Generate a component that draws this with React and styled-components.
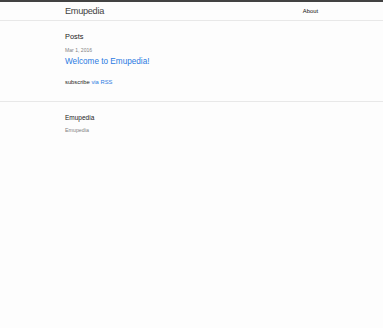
import React from "react";
import styled, { createGlobalStyle } from "styled-components";

const Global = createGlobalStyle`
  html, body { margin: 0; padding: 0; background: #fdfdfd; }
  body { font-family: "Liberation Sans", Arial, sans-serif; color: #111; }
`;

const Header = styled.header`
  border-top: 2px solid #424242;
  border-bottom: 1px solid #e8e8e8;
`;

const Wrapper = styled.div`
  width: 253px;
  margin: 0 auto;
`;

const HeaderRow = styled(Wrapper)`
  display: flex;
  justify-content: space-between;
  align-items: center;
  height: 18px;
`;

const SiteTitle = styled.a`
  font-size: 9.2px;
  letter-spacing: -0.3px;
  color: #424242;
  text-decoration: none;
`;

const NavLink = styled.a`
  font-size: 5.8px;
  color: #111;
  text-decoration: none;
`;

const Main = styled.main`
  padding: 11px 0 15px;
  border-bottom: 1px solid #e8e8e8;
`;

const Heading = styled.h1`
  font-size: 7.4px;
  font-weight: normal;
  line-height: 10px;
  margin: 0 0 5px;
  color: #222;
`;

const Meta = styled.div`
  font-size: 5.1px;
  line-height: 7px;
  color: #828282;
  margin-bottom: 2px;
`;

const PostLink = styled.a`
  display: block;
  font-size: 8.2px;
  line-height: 11px;
  color: #2a7ae2;
  text-decoration: none;
`;

const Rss = styled.p`
  font-size: 5.8px;
  line-height: 8px;
  margin: 11px 0 0;
  color: #222;
  a { color: #2a7ae2; text-decoration: none; }
`;

const Footer = styled.footer`
  padding-top: 11px;
`;

const FooterHeading = styled.h2`
  font-size: 6.5px;
  font-weight: normal;
  line-height: 9px;
  margin: 0 0 5px;
  color: #222;
`;

const FooterText = styled.div`
  font-size: 5.3px;
  line-height: 7px;
  color: #828282;
`;

export default function App() {
  return (
    <>
      <Global />
      <Header>
        <HeaderRow>
          <SiteTitle href="#">Emupedia</SiteTitle>
          <NavLink href="#">About</NavLink>
        </HeaderRow>
      </Header>
      <Main>
        <Wrapper>
          <Heading>Posts</Heading>
          <Meta>Mar 1, 2016</Meta>
          <PostLink href="#">Welcome to Emupedia!</PostLink>
          <Rss>subscribe <a href="#">via RSS</a></Rss>
        </Wrapper>
      </Main>
      <Footer>
        <Wrapper>
          <FooterHeading>Emupedia</FooterHeading>
          <FooterText>Emupedia</FooterText>
        </Wrapper>
      </Footer>
    </>
  );
}
